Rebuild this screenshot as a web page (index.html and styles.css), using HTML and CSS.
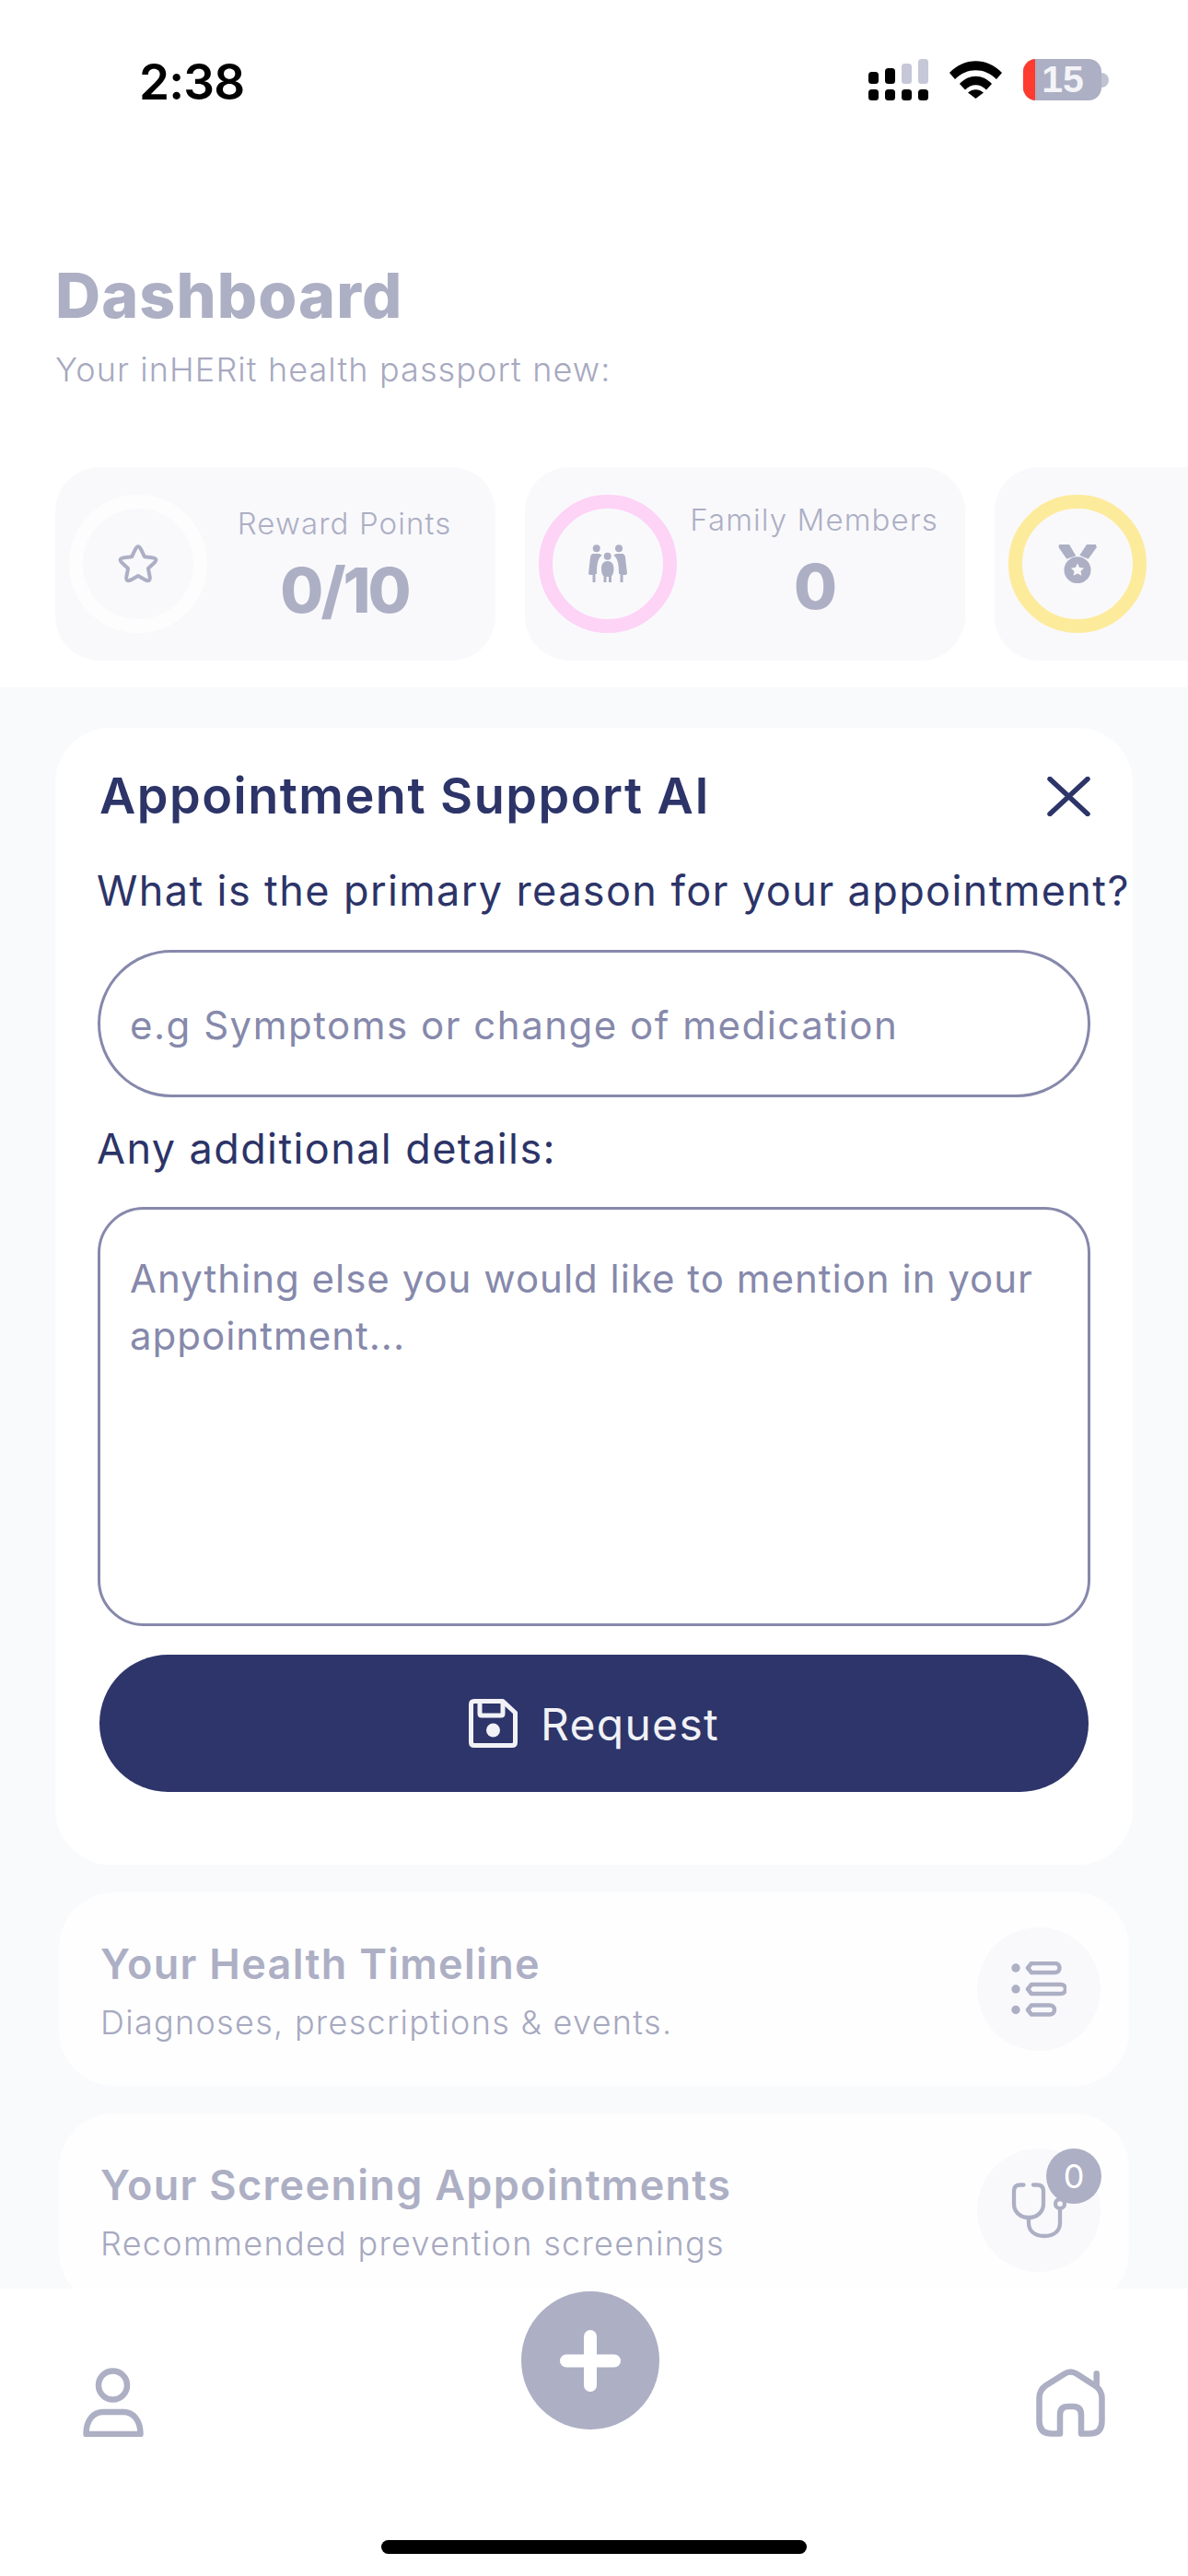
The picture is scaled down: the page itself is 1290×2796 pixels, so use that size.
FILE: index.html
```html
<!DOCTYPE html>
<html lang="en">
<head>
<meta charset="utf-8">
<title>Dashboard</title>
<link rel="stylesheet" href="styles.css">
</head>
<body>
<div class="app">
  <section class="top">
    <div class="status">
      <span class="time">2:38</span>
      <div class="status-icons">
        <svg class="signal" width="65" height="45" viewBox="0 0 65 45">
          <g fill="#000"><rect x="0" y="33" width="11" height="12" rx="3.5"/><rect x="18" y="33" width="11" height="12" rx="3.5"/><rect x="36" y="33" width="11" height="12" rx="3.5"/><rect x="54" y="33" width="11" height="12" rx="3.5"/><rect x="0" y="14" width="11" height="13" rx="3.5"/><rect x="18" y="10" width="11" height="17" rx="3.5"/></g>
          <g fill="#c6c7d7"><rect x="36" y="5" width="11" height="22" rx="3.5"/><rect x="54" y="0" width="11" height="27" rx="3.5"/></g>
        </svg>
        <svg class="wifi" width="57" height="41" viewBox="0 0 57 41"><path d="M0 13C16-4 41-4 57 13L51 20C38 7 19 7 6 20Z M11 25C21 14 36 14 46 25L40 31.5C33 24.5 24 24.5 17 31.5Z M20 34.5C25 30 32 30 37 34.5L28.5 41Z" fill="#000"/></svg>
        <div class="battery"><span class="battery-low"></span><span class="battery-num">15</span></div>
        <span class="battery-nub"></span>
      </div>
    </div>
    <h1 class="page-title">Dashboard</h1>
    <p class="page-sub">Your inHERit health passport new:</p>
    <div class="stats">
      <div class="stat">
        <div class="ring ring-white">
          <svg class="star" width="42" height="42" viewBox="0 0 42 42" fill="none" stroke="#adafc4" stroke-width="4" stroke-linejoin="round"><path d="M17.6 5.85Q21 -1.5 24.4 5.85L27.8 13.2 35.8 14.15Q43.8 15.1 37.85 20.55L31.9 26 33.5 34Q35.1 41.9 28 38L21 34 14 38Q6.9 41.9 8.5 34L10.1 26 4.15 20.55Q-1.8 15.1 6.2 14.15L14.2 13.2Z"/></svg>
        </div>
        <div class="stat-info stat-info-low">
          <span class="stat-label">Reward Points</span>
          <span class="stat-value">0/10</span>
        </div>
      </div>
      <div class="stat">
        <div class="ring ring-pink">
          <svg width="42" height="42" viewBox="0 0 42 42" fill="#adafc4"><circle cx="8.7" cy="4.3" r="4"/><circle cx="33" cy="4.3" r="4"/><circle cx="20.7" cy="12.7" r="4"/><path d="M5.5 10H11C13 10 14 11 14.5 12C10 15 9 22 9 32H7.5V41H4.5V33H1.5C0 33-.2 31 .3 29L2 14C2.5 11 3.5 10 5.5 10Z"/><path d="M36.5 10H31C29 10 28 11 27.5 12C32 15 33 22 33 32H34.5V41H37.5V33H40.5C42 33 42.2 31 41.7 29L40 14C39.500 11 38.5 10 36.5 10Z"/><path d="M20.700 18C25 18 27.500 21 27.500 26C27.500 31 26 34 25 34V41H22V35H19.500V41H16.500V34C15.500 34 14 31 14 26C14 21 16.500 18 20.700 18Z"/></svg>
        </div>
        <div class="stat-info">
          <span class="stat-label">Family Members</span>
          <span class="stat-value">0</span>
        </div>
      </div>
      <div class="stat">
        <div class="ring ring-yellow">
          <svg width="42" height="42" viewBox="0 0 42 42" fill="#adafc4"><path d="M1 0H12L19.300 12.300 9.300 15.700 .5 3Z"/><path d="M31 0H41L41.700 3.300 32.700 15.700 23.300 11.700Z"/><circle cx="21" cy="27.700" r="14.500"/><path d="M21 20.500L23.200 25 28 25.600 24.500 29 25.400 33.800 21 31.500 16.600 33.800 17.500 29 14 25.600 18.800 25Z" fill="#f9f9fc"/></svg>
        </div>
      </div>
    </div>
  </section>

  <main class="content">
    <section class="modal">
      <div class="modal-head">
        <h2 class="modal-title">Appointment Support AI</h2>
        <svg class="close" width="47" height="43" viewBox="0 0 47 43" fill="none" stroke="#2c3468" stroke-width="5.500" stroke-linecap="round"><path d="M3 2.500L44 40.500M44 2.500L3 40.500"/></svg>
      </div>
      <label class="field-label field-label-first">What is the primary reason for your appointment?</label>
      <input class="field-input" type="text" placeholder="e.g Symptoms or change of medication">
      <label class="field-label field-label-second">Any additional details:</label>
      <textarea class="field-area" placeholder="Anything else you would like to mention in your appointment..."></textarea>
      <button class="request" type="button">
        <svg width="53" height="53" viewBox="0 0 53 53" fill="none" stroke="#f1f1f6" stroke-width="5" stroke-linejoin="round"><path d="M2.500 6Q2.500 2.500 6 2.500H37L50.500 15V47Q50.500 50.500 47 50.500H6Q2.500 50.500 2.500 47Z"/><path d="M12 3V16Q12 18 14 18H35Q37 18 37 16V3"/><circle cx="26.500" cy="34" r="7.500" fill="#f1f1f6" stroke="none"/></svg>
        <span class="request-text">Request</span>
      </button>
    </section>

    <article class="link-card">
      <div class="link-text">
        <h3 class="link-title">Your Health Timeline</h3>
        <p class="link-sub">Diagnoses, prescriptions &amp; events.</p>
      </div>
      <div class="link-icon">
        <svg width="60" height="60" viewBox="0 0 60 60" fill="none" stroke="#adafc4" stroke-width="4.500" stroke-linejoin="round"><g fill="#adafc4" stroke="none"><circle cx="5" cy="7" r="4.700"/><circle cx="5" cy="30" r="4.700"/><circle cx="5" cy="52.500" r="4.700"/></g><path d="M18 7L22 2H47.500A5 5 0 0 1 47.500 12H22Z"/><path d="M18 30L22 25H54A5 5 0 0 1 54 35H22Z"/><path d="M18 52.500L22 47.500H42A5 5 0 0 1 42 57.500H22Z"/></svg>
      </div>
    </article>

    <article class="link-card">
      <div class="link-text">
        <h3 class="link-title">Your Screening Appointments</h3>
        <p class="link-sub">Recommended prevention screenings</p>
      </div>
      <div class="link-icon">
        <svg width="60" height="62" viewBox="0 0 60 62" fill="none" stroke="#adafc4" stroke-width="4.300" stroke-linecap="round"><path d="M13.500 3.500H10Q3 3.500 3 10V24C3 33 10 39 19 39C28 39 35 33 35 24V10Q35 3.500 28 3.500H24"/><path d="M19 39V45C19 53 25 59 36 59C47 59 53 53 53 45V30"/><circle cx="53" cy="24" r="5" fill="#f9f9fc"/></svg>
        <span class="badge">0</span>
      </div>
    </article>
  </main>

  <nav class="nav">
    <div class="nav-row">
      <svg class="nav-person" width="66" height="75" viewBox="0 0 66 75" fill="none" stroke="#adafc4" stroke-width="6.500" stroke-linejoin="round"><circle cx="32.500" cy="19" r="15.500"/><path d="M3.500 72C3.500 56 12 48 22 48H44C54 48 62.500 56 62.500 72Z"/></svg>
      <button class="fab" type="button" aria-label="Add">
        <svg width="66" height="67" viewBox="0 0 66 67" fill="none" stroke="#fff" stroke-width="14" stroke-linecap="round"><path d="M33 7V60M7 33.500H59"/></svg>
      </button>
      <svg class="nav-home" width="75" height="74" viewBox="0 0 75 74" fill="none" stroke="#adafc4" stroke-width="6.500" stroke-linecap="round" stroke-linejoin="round"><path d="M26 70.500H17Q3.500 70.500 3.500 57V32Q3.500 23 11 18L31 5.500Q37.500 1.500 44 5.500L65 19Q71.500 24 71.500 32V57Q71.500 70.500 58 70.500H49V50Q49 41 40 41H35Q26 41 26 50Z"/><path d="M65.700 5.300V19"/></svg>
    </div>
    <div class="home-bar"></div>
  </nav>
</div>
</body>
</html>
```
FILE: styles.css
```css
* { box-sizing: border-box; }
html, body { margin: 0; padding: 0; background: #fff; }
body { font-family: Inter, "Noto Sans", "Liberation Sans", sans-serif; }
h1, h2, h3, p { margin: 0; }

.app {
  width: 1290px;
  height: 2796px;
  display: flex;
  flex-direction: column;
  overflow: hidden;
  background: #fff;
}

.top { height: 746px; flex: none; background: #fff; overflow: hidden; }

.status {
  height: 109px;
  padding: 64px 86px 0 151px;
  display: flex;
  justify-content: space-between;
  align-items: flex-start;
}
.time { margin-top: 3px; font-size: 53px; line-height: 45px; font-weight: 600; color: #000; letter-spacing: -.8px; }
.status-icons { display: flex; align-items: center; height: 45px; }
.wifi { margin-left: 23px; }
.battery {
  width: 85px;
  height: 45px;
  margin-left: 23px;
  border-radius: 14px;
  background: #adafc4;
  overflow: hidden;
  display: flex;
  align-items: center;
}
.battery-low { width: 13px; height: 45px; background: #ff3b30; flex: none; }
.battery-num {
  flex: 1;
  text-align: center;
  padding-right: 12px;
  font-size: 41px;
  font-weight: 700;
  color: #f4f4f8;
  font-family: "Liberation Sans", sans-serif;
}
.battery-nub { width: 8px; height: 16px; background: #c0c1d2; border-radius: 0 8px 8px 0; }

.page-title {
  margin: 171px 0 0 60px;
  font-size: 68px;
  line-height: 80px;
  font-weight: 800;
  letter-spacing: 1.1px;
  color: #adafc4;
}
.page-sub {
  margin: 16px 0 0 60px;
  font-size: 36px;
  line-height: 50px;
  font-weight: 300;
  letter-spacing: 1.1px;
  color: #a7a9c0;
}

.stats { margin: 81px 0 0 60px; display: flex; gap: 32px; }
.stat {
  width: 478px;
  height: 210px;
  flex: none;
  padding: 30px 15px;
  display: flex;
  background: #f9f9fc;
  border-radius: 48px;
}
.ring {
  width: 150px;
  height: 150px;
  flex: none;
  border-radius: 50%;
  border: 15px solid;
  display: flex;
  align-items: center;
  justify-content: center;
}
.star { overflow: visible; }
.ring-white { border-color: #fdfdfe; }
.ring-pink { border-color: #fdd3f6; }
.ring-yellow { border-color: #fdeb9c; }
.stat-info {
  flex: 1;
  display: flex;
  flex-direction: column;
  align-items: center;
  justify-content: center;
  padding-bottom: 7px;
  color: #adafc4;
}
.stat-info-low { padding-top: 2px; padding-bottom: 0; }
.stat-label { font-size: 33px; line-height: 44px; font-weight: 300; letter-spacing: 1.1px; white-space: nowrap; }
.stat-value { margin-top: 10px; font-size: 68px; line-height: 80px; font-weight: 800; letter-spacing: -3px; }

.content { flex: 1; min-height: 0; overflow: hidden; background: #f9fafc; padding: 44px 60px 0; }

.modal {
  height: 1234px;
  padding: 40px 46px 0;
  background: #fff;
  border-radius: 60px;
}
.modal-head { display: flex; justify-content: space-between; align-items: center; height: 68px; padding-left: 2px; }
.modal-title { font-size: 54px; line-height: 68px; font-weight: 600; letter-spacing: 1.5px; color: #2c3468; }
.field-label { display: block; margin-left: -1px; font-size: 45px; line-height: 60px; letter-spacing: 1.4px; color: #2c3468; white-space: nowrap; }
.field-label-first { margin-top: 39px; }
.field-label-second { margin-top: 26px; }
.field-input, .field-area {
  display: block;
  width: 100%;
  border: 3px solid #8688ab;
  background: #fff;
  font: 400 42px/62px Inter, "Noto Sans", sans-serif;
  color: #2c3468;
  outline: none;
}
.field-input::placeholder, .field-area::placeholder { color: #8689ab; opacity: 1; }
.field-input { height: 160px; margin-top: 34px; border-radius: 80px; padding: 3px 32px 0; letter-spacing: 1.5px; }
.field-area { height: 455px; margin-top: 33px; border-radius: 50px; padding: 44px 32px 0; letter-spacing: 1px; resize: none; overflow: hidden; }

.request {
  width: 1074px;
  height: 149px;
  margin: 31px 2px 0;
  display: flex;
  align-items: center;
  justify-content: center;
  gap: 25px;
  border: none;
  border-radius: 75px;
  background: #2d356a;
  color: #f1f1f6;
  font: 400 48px/60px Inter, "Noto Sans", sans-serif;
  letter-spacing: 1.3px;
}
.request-text { padding-top: 3px; }

.link-card {
  width: 1162px;
  height: 210px;
  flex: none;
  margin: 30px 4px 0;
  padding: 0 31px 0 45px;
  display: flex;
  justify-content: space-between;
  align-items: center;
  background: #fefeff;
  border-radius: 60px;
}
.link-text { padding-top: 8px; }
.link-title { font-size: 45px; line-height: 60px; font-weight: 600; letter-spacing: 1.3px; color: #adafc4; white-space: nowrap; }
.link-sub { margin-top: 3px; font-size: 36px; line-height: 60px; font-weight: 300; letter-spacing: 1.3px; color: #a7a9c0; white-space: nowrap; }
.link-icon {
  width: 134px;
  height: 134px;
  flex: none;
  position: relative;
  display: flex;
  align-items: center;
  justify-content: center;
  border-radius: 50%;
  background: #f9f9fc;
}
.badge {
  position: absolute;
  top: 0;
  right: -1px;
  width: 60px;
  height: 60px;
  border-radius: 50%;
  background: #adafc4;
  color: #fff;
  font-size: 36px;
  line-height: 60px;
  text-align: center;
}

.nav { height: 312px; flex: none; background: #fff; }
.nav-row {
  height: 161px;
  padding: 3px 90px 0;
  display: flex;
  justify-content: space-between;
  align-items: flex-start;
}
.nav-person { margin-top: 83px; }
.nav-home { margin-top: 84px; }
.fab {
  width: 150px;
  height: 150px;
  padding: 0;
  border: none;
  border-radius: 50%;
  background: #adafc4;
  display: flex;
  align-items: center;
  justify-content: center;
}
.home-bar { width: 462px; height: 15px; margin: 112px auto 0; border-radius: 8px; background: #000; }
```
